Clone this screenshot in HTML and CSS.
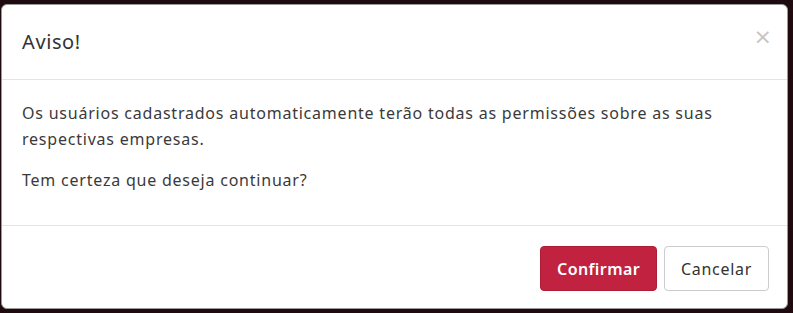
FILE: index.html
```html
<!DOCTYPE html>
<html lang="pt-BR">
<head>
  <meta charset="UTF-8" />
  <title>Aviso</title>
  <link rel="stylesheet" href="styles.css">
</head>
<body>
  <div class="backdrop">
    <div class="modal">
      <div class="modal-header">
        <h4 class="modal-title">Aviso!</h4>
        <button class="close">&times;</button>
      </div>
      <div class="modal-body">
        <p>Os usuários cadastrados automaticamente terão todas as permissões sobre as suas respectivas empresas.</p>
        <p>Tem certeza que deseja continuar?</p>
      </div>
      <div class="modal-footer">
        <button class="btn btn-confirm">Confirmar</button>
        <button class="btn btn-cancel">Cancelar</button>
      </div>
    </div>
  </div>
</body>
</html>
```

FILE: styles.css
```css
body {
  margin: 0;
  background: #1e0a0f;
  font-family: 'Noto Sans', 'Open Sans', sans-serif;
  color: #333;
}

.backdrop {
  padding: 4px 5px 4px 1px;
}

.modal {
  background: white;
  border: 1px solid #999;
  border-radius: 6px;
  height: 303px;
  display: flex;
  flex-direction: column;
}

.modal-header {
  height: 74px;
  border-bottom: 1px solid #e5e5e5;
  display: flex;
  align-items: center;
  justify-content: space-between;
  padding: 0 20px;
}

.modal-title {
  margin: 0 0 2px;
  font-size: 20px;
  font-weight: normal;
  letter-spacing: 0.6px;
  color: #333;
}

.close {
  background: none;
  border: none;
  font-size: 22px;
  color: #c4c4c4;
  padding: 0;
  margin: 0 -5px 12px 0;
  font-family: 'DejaVu Sans', sans-serif;
  cursor: pointer;
}

.modal-body {
  padding: 20px 20px 15px;
  font-size: 16px;
  letter-spacing: 0.78px;
  line-height: 26px;
  height: 110px;
  color: #3a3a3a;
}

.modal-body p {
  margin: 0 0 15px;
}

.modal-footer {
  border-top: 1px solid #e5e5e5;
  flex: 1;
  display: flex;
  justify-content: flex-end;
  align-items: flex-start;
  gap: 7px;
  padding: 20px 18px 0;
}

.btn {
  height: 45px;
  padding: 0 16px;
  font-size: 16px;
  font-family: inherit;
  letter-spacing: 0.7px;
  border-radius: 4px;
  cursor: pointer;
}

.btn-confirm {
  background: #c1223f;
  border: 1px solid #ae1d37;
  color: white;
  font-weight: 600;
  letter-spacing: 0.4px;
}

.btn-cancel {
  background: white;
  border: 1px solid #ccc;
  color: #333;
}
```
